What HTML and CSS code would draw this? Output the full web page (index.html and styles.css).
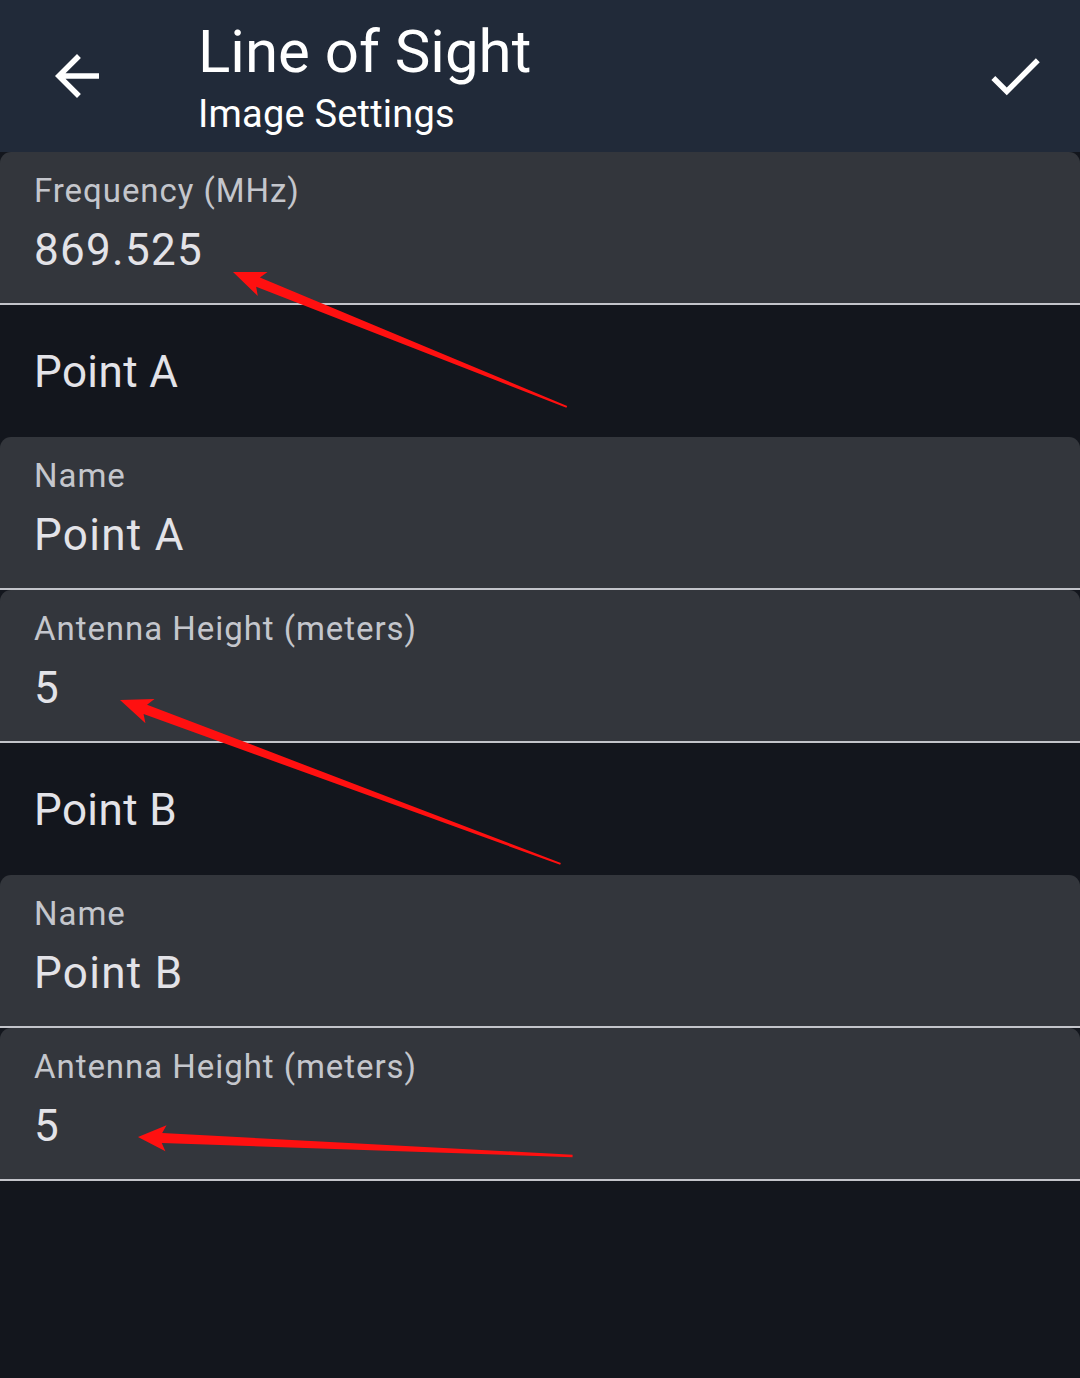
FILE: index.html
```html
<!DOCTYPE html>
<html lang="en">
<head>
<meta charset="utf-8">
<title>Line of Sight</title>
<link rel="stylesheet" href="styles.css">
</head>
<body>
<div class="app">
  <header class="topbar">
    <button class="icon-btn back" aria-label="Back">
      <svg viewBox="0 0 24 24" width="66" height="66"><path fill="#ffffff" d="M20 11H7.83l5.59-5.59L12 4l-8 8 8 8 1.41-1.41L7.83 13H20v-2z"/></svg>
    </button>
    <div class="titles">
      <div class="title">Line of Sight</div>
      <div class="subtitle">Image Settings</div>
    </div>
    <button class="icon-btn check" aria-label="Save">
      <svg viewBox="0 0 24 24" width="66" height="66"><path fill="#ffffff" d="M9 16.17L4.83 12l-1.42 1.41L9 19 21 7l-1.41-1.41z"/></svg>
    </button>
  </header>

  <main class="content">
    <div class="field">
      <div class="label">Frequency (MHz)</div>
      <div class="value">869.525</div>
    </div>

    <div class="section">Point A</div>

    <div class="field">
      <div class="label">Name</div>
      <div class="value">Point A</div>
    </div>
    <div class="field">
      <div class="label">Antenna Height (meters)</div>
      <div class="value">5</div>
    </div>

    <div class="section">Point B</div>

    <div class="field">
      <div class="label">Name</div>
      <div class="value">Point B</div>
    </div>
    <div class="field">
      <div class="label">Antenna Height (meters)</div>
      <div class="value">5</div>
    </div>
  </main>

  <svg class="annotations" width="1080" height="1378" viewBox="0 0 1080 1378">
    <g transform="translate(233 272) rotate(22)">
      <polygon fill="#ff1010" points="0,0 32,-13 27,-5 360,-1 360,1 27,5 32,13"/>
    </g>
    <g transform="translate(120 700) rotate(20.4)">
      <polygon fill="#ff1010" points="0,0 32,-13 27,-5 470,-1 470,1 27,5 32,13"/>
    </g>
    <g transform="translate(138 1137) rotate(2.5)">
      <polygon fill="#ff1010" points="0,0 28,-13 24,-5 435,-1.2 435,1.2 24,5 28,13"/>
    </g>
  </svg>
</div>
</body>
</html>
```

FILE: styles.css
```css
* { box-sizing: border-box; }

html, body {
  margin: 0;
  padding: 0;
  background: #13161d;
}

body {
  width: 1080px;
  height: 1378px;
  overflow: hidden;
  font-family: Roboto, "Noto Sans", "Liberation Sans", sans-serif;
  color: #e3e3e8;
}

.app {
  position: relative;
  width: 1080px;
  height: 1378px;
  background: #13161d;
}

.topbar {
  height: 152px;
  background: #212a39;
  display: flex;
  align-items: center;
}

.icon-btn {
  border: 0;
  background: transparent;
  padding: 0;
  width: 66px;
  height: 66px;
  display: flex;
  align-items: center;
  justify-content: center;
}

.icon-btn svg { display: block; }

.back { margin-left: 44px; }

.titles {
  margin-left: 88px;
  flex: 1;
  display: flex;
  flex-direction: column;
  padding-top: 0;
}

.title {
  font-size: 60px;
  line-height: 70px;
  color: #ffffff;
  font-weight: 400;
}

.subtitle {
  margin-top: 5px;
  font-size: 38px;
  line-height: 44px;
  color: #ffffff;
  letter-spacing: 0.2px;
}

.check { margin-right: 32px; }

.content {
  display: flex;
  flex-direction: column;
}

.field {
  height: 153px;
  background: #33363c;
  border-radius: 11px 11px 0 0;
  border-bottom: 2px solid #c3c4ca;
  padding: 19px 33px 0 34px;
  display: flex;
  flex-direction: column;
}

.label {
  font-size: 33px;
  line-height: 40px;
  letter-spacing: 0.95px;
  color: #c4c6cc;
}

.value {
  margin-top: 13px;
  font-size: 44px;
  line-height: 52px;
  letter-spacing: 1.3px;
  color: #e3e3e8;
}

.section {
  height: 132px;
  display: flex;
  align-items: center;
  padding-left: 34px;
  padding-top: 1px;
  font-size: 44px;
  letter-spacing: 0.4px;
  color: #e3e3e8;
}

.annotations {
  position: absolute;
  left: 0;
  top: 0;
  pointer-events: none;
}
```
